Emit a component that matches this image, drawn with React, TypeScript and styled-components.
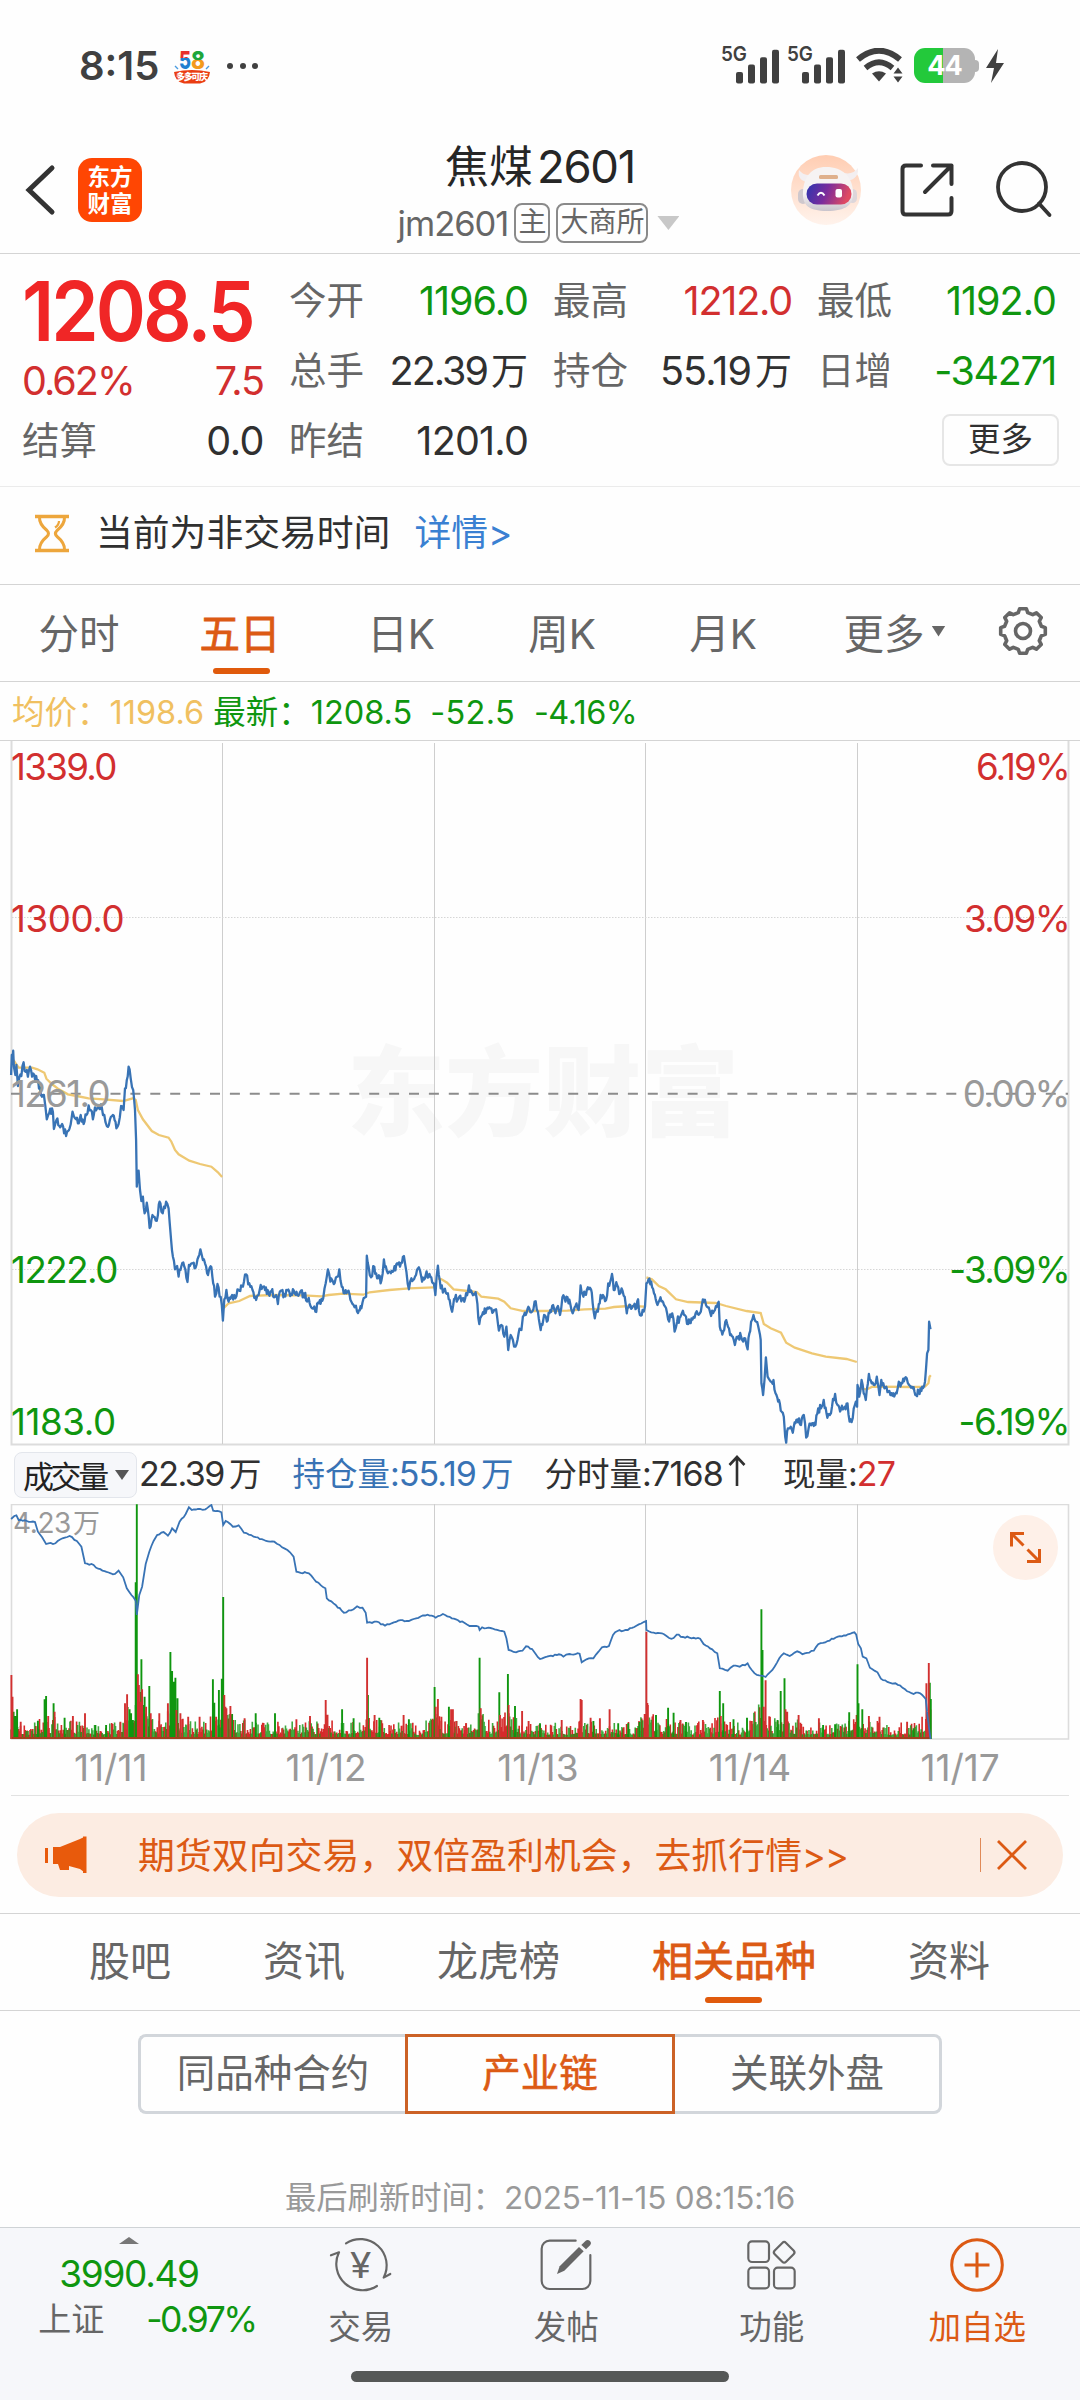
import React from "react";
import styled, { createGlobalStyle } from "styled-components";

const C = {
  red: "#d22f2f",
  green: "#0f960f",
  gray: "#666666",
  dark: "#303030",
  mute: "#999999",
  orange: "#dc5a14",
  blue: "#3873b5",
  gold: "#f0c060",
  line: "#d4d4d4",
};

const GlobalStyle = createGlobalStyle`
  * { box-sizing: border-box; }
  body { margin: 0; background: #fff; }
  svg { display: block; flex: none; }
`;

const Page = styled.div`
  width: 1080px;
  height: 2400px;
  display: flex;
  flex-direction: column;
  overflow: hidden;
  background: #fefefe;
  color: ${C.dark};
  font-family: Inter, "Noto Sans CJK SC", sans-serif;
  white-space: nowrap;
`;

const Txt = styled.span<{ $s: number; $c?: string; $ls?: number; $w?: number }>`
  font-size: ${(p) => p.$s}px;
  color: ${(p) => p.$c ?? "inherit"};
  letter-spacing: ${(p) => p.$ls ?? 0}px;
  font-weight: ${(p) => p.$w ?? 400};
`;

/* ---------- status bar ---------- */

const StatusBar = styled.div`
  height: 131px;
  flex: none;
  display: flex;
  align-items: center;
  justify-content: space-between;
  padding: 0 74px 0 79px;
  color: #404040;
`;

const StatusGroup = styled.div`
  display: flex;
  align-items: center;
`;

const BadgeBox = styled.span`
  margin-left: 13px;
`;

const PromoBadge = () => (
  <svg width="40" height="40" viewBox="0 0 40 40">
    <defs>
      <linearGradient id="five" x1="0" y1="0" x2="0" y2="1">
        <stop offset="0.45" stopColor="#e8302a" />
        <stop offset="0.45" stopColor="#1f7fd0" />
      </linearGradient>
      <linearGradient id="eight" x1="0" y1="0" x2="0" y2="1">
        <stop offset="0.52" stopColor="#1fa53a" />
        <stop offset="0.52" stopColor="#f39a1d" />
      </linearGradient>
    </defs>
    <text x="7" y="22.500" fontFamily="Inter" fontSize="25" fontWeight="800" fill="url(#five)" textLength="12" lengthAdjust="spacingAndGlyphs">5</text>
    <text x="19" y="22.500" fontFamily="Inter" fontSize="25" fontWeight="800" fill="url(#eight)" textLength="14" lengthAdjust="spacingAndGlyphs">8</text>
    <path d="M3 20l3 3M37 20l-3 3" stroke="#4a9be0" strokeWidth="1.4" />
    <path d="M2 26Q20 22 38 26Q37 36 28 37.500H12Q3 36 2 26Z" fill="#ea3d12" />
    <text x="4" y="34" fontFamily="Noto Sans CJK SC" fontSize="9" fontWeight="900" fill="#fff" textLength="32">多多可庆</text>
  </svg>
);

const Dots = styled.div`
  display: flex;
  gap: 6.5px;
  margin-left: 15px;
  i {
    width: 6px;
    height: 6px;
    border-radius: 3px;
    background: #404040;
  }
`;

const Signal = ({ w }: { w: number }) => (
  <svg width={w} height="56" viewBox={`0 -8 ${w} 56`}>
    <text x="0" y="14.500" fontFamily="Inter" fontSize="20.500" fontWeight="600" fill="#404040" textLength="26" lengthAdjust="spacingAndGlyphs">5G</text>
    {[0, 1, 2, 3].map((i) => (
      <rect key={i} x={15 + i * 12} y={26 - i * 7.4} width="7" height={11.5 + i * 7.4} rx="2" fill="#404040" />
    ))}
  </svg>
);

const Wifi = () => (
  <svg width="48" height="36" viewBox="0 0 48 36" fill="none" stroke="#404040">
    <path d="M2 11.500Q23 -6 44 11.500" strokeWidth="6" />
    <path d="M9.500 20Q23 8.500 36.500 20" strokeWidth="5.600" />
    <path d="M16 25.500Q23 21 30 25.500L23 33.500Z" fill="#404040" stroke="none" />
    <path d="M37.500 25.500L42 19.500L46.500 25.500ZM37.500 28.500H46.500L42 34.500Z" fill="#404040" stroke="none" />
  </svg>
);

const Battery = styled.div`
  width: 61px;
  height: 35px;
  margin-left: 10px;
  border-radius: 11px;
  display: flex;
  align-items: center;
  justify-content: center;
  color: #fff;
  font-size: 27px;
  font-weight: 700;
  letter-spacing: -1px;
  background: linear-gradient(90deg, #23c93b 47%, #b4b4b4 47%);
`;

const BatteryTip = styled.div`
  width: 4px;
  height: 12px;
  margin-right: 3px;
  border-radius: 0 4px 4px 0;
  background: #b4b4b4;
`;

/* ---------- title header ---------- */

const Header = styled.header`
  height: 123px;
  flex: none;
  display: grid;
  grid-template-columns: 330px 1fr 330px;
  border-bottom: 1px solid ${C.line};
`;

const HeaderLeft = styled.div`
  display: flex;
  align-items: center;
  padding: 0 0 4px 25px;
  gap: 22px;
`;

const Logo = styled.div`
  width: 64px;
  height: 64px;
  border-radius: 14px;
  background: #ff4603;
  color: #fff;
  font-size: 22.5px;
  font-weight: 700;
  line-height: 27px;
  padding-top: 5px;
  text-align: center;
`;

const TitleBox = styled.div`
  display: flex;
  flex-direction: column;
  align-items: center;
  padding-top: 8px;
`;

const TitleLine = styled.div`
  height: 56px;
  line-height: 56px;
  color: #262626;
  display: flex;
  gap: 4px;
`;

const SubLine = styled.div`
  height: 56px;
  display: flex;
  align-items: center;
  color: ${C.gray};
  margin-right: 3px;
`;

const Tag = styled.span`
  height: 40px;
  padding: 0 2px;
  margin-left: 6px;
  border: 2px solid #8a8a8a;
  border-radius: 8px;
  font-size: 28px;
  line-height: 35px;
`;

const HeaderRight = styled.div`
  display: flex;
  align-items: center;
  gap: 36px;
  padding: 0 0 4px 41px;
`;

const Robot = () => (
  <svg width="70" height="70" viewBox="0 0 70 70">
    <defs>
      <linearGradient id="halo" x1="0" y1="0" x2="0" y2="1">
        <stop offset="0" stopColor="#ffcdb2" />
        <stop offset="1" stopColor="#fff3ec" />
      </linearGradient>
      <linearGradient id="visor" x1="0" y1="0" x2="1" y2="0.2">
        <stop offset="0" stopColor="#2c35b0" />
        <stop offset="0.5" stopColor="#7a2c9c" />
        <stop offset="1" stopColor="#e04a62" />
      </linearGradient>
      <linearGradient id="shell" x1="0" y1="0" x2="0" y2="1">
        <stop offset="0.6" stopColor="#f6f3f3" />
        <stop offset="1" stopColor="#c9c4cc" />
      </linearGradient>
    </defs>
    <circle cx="35" cy="35" r="35" fill="url(#halo)" />
    <path d="M16 27Q6 25 8 15Q14 22 20 19ZM56 26Q68 24 67 13Q62 20 53 18Z" fill="#f3eff1" />
    <rect x="7" y="34" width="10" height="15" rx="5" fill="#cfc8cd" />
    <rect x="57" y="34" width="9" height="14" rx="4.500" fill="#ddd6da" />
    <path d="M35 12C52 12 61 22 62 36C63 50 55 56 36 56C18 56 11 50 12 37C13 22 20 12 35 12Z" fill="url(#shell)" />
    <rect x="28" y="20" width="19" height="4" rx="1.500" fill="#dfb08c" />
    <rect x="15.500" y="28.500" width="45" height="21" rx="10.500" fill="url(#visor)" />
    <path d="M26.500 40.500Q30 35 33.500 40.500" stroke="#fff" strokeWidth="2" fill="none" />
    <rect x="44.500" y="34" width="6.500" height="8.500" rx="2" fill="#fff" />
  </svg>
);

const ShareIcon = () => (
  <svg width="60" height="60" viewBox="0 0 60 60" fill="none" stroke="#333" strokeWidth="4" strokeLinecap="round" strokeLinejoin="round">
    <path d="M24 5.500H9Q5.500 5.500 5.500 9V51Q5.500 54.500 9 54.500H51Q54.500 54.500 54.500 51V38" />
    <path d="M36 5.500H54.500V24M54.500 5.500L28 32" />
  </svg>
);

const SearchIcon = () => (
  <svg width="60" height="60" viewBox="0 0 60 60" fill="none" stroke="#333" strokeWidth="3.800" strokeLinecap="round">
    <circle cx="29" cy="27" r="24" />
    <path d="M46 43.500L56.500 55" />
  </svg>
);

/* ---------- quote summary ---------- */

const Quote = styled.section`
  height: 233px;
  flex: none;
  display: grid;
  grid-template-columns: 242px 239px 239px 239px;
  column-gap: 25px;
  padding: 12px 0 0 22px;
  border-bottom: 1px solid #ebebeb;
`;

const QuoteCol = styled.div`
  display: flex;
  flex-direction: column;
`;

const QuoteRow = styled.div<{ $h?: number }>`
  height: ${(p) => p.$h ?? 70}px;
  line-height: ${(p) => p.$h ?? 70}px;
  display: flex;
  justify-content: space-between;
`;

const LastPrice = styled.span`
  font-size: 82.5px;
  font-weight: 600;
  letter-spacing: -3.2px;
  color: #f02626;
  transform: scaleX(0.923);
  transform-origin: left center;
`;

const Label = styled.span`
  font-size: 37.5px;
  color: ${C.gray};
`;

const MoreButton = styled.div`
  width: 117px;
  height: 52px;
  margin: 8px -3px 0 auto;
  border: 2px solid #e6e6e6;
  border-radius: 8px;
  text-align: center;
  font-size: 32.5px;
  line-height: 47px;
`;

const WanGroup = styled.span<{ $gap: number }>`
  display: inline-flex;
  align-items: baseline;
  gap: ${(p) => p.$gap}px;
`;

const Wanned = ({ n, s, cjk, ls, gap = 4 }: { n: string; s: number; cjk: number; ls: number; gap?: number }) => (
  <WanGroup $gap={gap}>
    <Txt $s={s} $ls={ls}>{n}</Txt>
    <Txt $s={cjk}>万</Txt>
  </WanGroup>
);

/* ---------- notice ---------- */

const Notice = styled.div`
  height: 98px;
  flex: none;
  display: flex;
  align-items: center;
  padding: 0 0 6px 35px;
  border-bottom: 1px solid ${C.line};
  font-size: 36.8px;
`;

const NoticeText = styled.span`
  margin: -5px 0 0 27px;
`;

const NoticeLink = styled.span`
  margin: -5px 0 0 24px;
  color: #3a80d2;
`;

const Hourglass = () => (
  <svg width="34" height="40" viewBox="0 0 34 40" fill="none" stroke="#eda63c" strokeWidth="3">
    <path d="M0 3.500H34M0 37.500H34" strokeWidth="3.600" />
    <path d="M4.500 4Q4 11 12 17.500Q15 20.500 12 23.500Q4 30 4.500 37M29.500 4Q30 11 22 17.500Q19 20.500 22 23.500Q30 30 29.500 37" />
    <path d="M24 8Q24 12 20 14.500" strokeWidth="2.200" />
  </svg>
);

/* ---------- period tabs ---------- */

const PeriodTabs = styled.nav`
  height: 97px;
  flex: none;
  display: flex;
  border-bottom: 1px solid ${C.line};
`;

const PeriodTab = styled.div<{ $on?: boolean; $w?: number }>`
  width: ${(p) => p.$w ?? 161}px;
  display: flex;
  position: relative;
  align-items: center;
  justify-content: center;
  padding: 0 3px 4px 0;
  font-size: 40.5px;
  color: ${(p) => (p.$on ? C.orange : C.gray)};
  -webkit-text-stroke: ${(p) => (p.$on ? 0.8 : 0)}px ${C.orange};
`;

const Underline = styled.i`
  position: absolute;
  left: 50%;
  bottom: 7px;
  width: 57px;
  height: 6px;
  margin-left: -29px;
  border-radius: 4px;
  background: #e05a0c;
`;

const Caret = styled.i<{ $w: number; $h: number; $c: string; $up?: boolean; $ml?: number }>`
  flex: none;
  width: ${(p) => p.$w}px;
  height: ${(p) => p.$h}px;
  margin-left: ${(p) => p.$ml ?? 0}px;
  background: ${(p) => p.$c};
  clip-path: ${(p) => (p.$up ? "polygon(50% 0, 100% 100%, 0 100%)" : "polygon(0 0, 100% 0, 50% 100%)")};
`;

const gearPath = (() => {
  const pts: string[] = [];
  for (let i = 0; i < 8; i++) {
    const a = (i * Math.PI) / 4 - Math.PI / 2;
    const at = (d: number, r: number) => `${(25 + Math.cos(a + d) * r).toFixed(1)} ${(25 + Math.sin(a + d) * r).toFixed(1)}`;
    pts.push(at(-0.25, 19), at(-0.15, 22.6), at(0.15, 22.6), at(0.25, 19));
  }
  return `M${pts.join("L")}Z`;
})();

const Gear = () => (
  <svg width="50" height="50" viewBox="0 0 50 50" fill="none" stroke={C.gray} strokeWidth="3.600" strokeLinejoin="round">
    <path d={gearPath} />
    <circle cx="25" cy="25" r="7.500" />
  </svg>
);

const AverageRow = styled.div`
  height: 59px;
  flex: none;
  display: flex;
  line-height: 61px;
  padding-left: 12px;
  border-bottom: 1px solid ${C.line};
`;

const AverageItem = styled.span<{ $c: string; $ml?: number }>`
  color: ${(p) => p.$c};
  margin-left: ${(p) => p.$ml ?? 0}px;
  display: flex;
`;

/* ---------- charts ---------- */

type Pt = [number, number];

const parse = (s: string, x0: number, sx: number, y0: number): Pt[] =>
  s.trim().split(/\s+/).map((p) => {
    const [x, y] = p.split(",").map(Number);
    return [x / sx + x0, y / 3 + y0];
  });

const L = (s: string, y0: number) => parse(s, 0, 2.8, y0);
const R = (s: string, y0: number) => parse(s, 540, 2.904, y0);

const makeRandom = (seed: number) => () => {
  seed = (seed * 1664525 + 1013904223) % 4294967296;
  return seed / 4294967296;
};

const price: Pt[] = [
  ...L(
    `31,225 33,165 35,185 37,152 39,200 43,225 46,195 50,258 54,232 60,228 66,187 72,215 78,230 84,200 90,230 96,225 104,245 112,262 118,290 123,285 127,320 131,358 138,338 148,335 151,387 158,360 166,378 174,372 185,408 195,385 203,335 210,355 218,370 226,345 234,372 242,345 248,316 254,330 260,358 266,322 275,325 285,322 292,345 299,378 308,358 316,345 326,385 332,372 339,318 346,330 350,265 355,240 360,200 366,235 373,270 378,330 381,420 383,560 388,512 392,570 396,603 400,590 405,640 411,608 419,684 427,645 436,662 442,645 447,605 452,635 459,620 465,605 472,625 475,665 479,720 484,770 490,808 496,798 500,830 508,798 516,800 525,846 529,795 537,790 545,805 553,778 561,748 568,780 574,790 580,820 592,802 597,850 602,890 609,852 615,890 621,915 624,962 628,898 634,870 640,905 650,885 659,895 668,870 680,860 689,823 698,850 707,870 717,900 724,885 730,855 742,870 752,882 760,875 770,890 778,912 786,872 796,882 810,875 825,880 838,882 850,880 862,900 874,925 883,935 893,910 905,895 912,850 918,808 925,845 937,850 944,830 950,808 957,860 965,880 973,875 984,905 993,922 1000,935 1012,925 1018,895 1025,890 1027,767 1032,800 1039,832 1048,800 1056,835 1068,842 1075,778 1083,812 1092,815 1102,812 1112,790 1120,800 1131,768 1138,815 1145,868 1152,835 1162,830 1173,802 1182,845 1192,825 1205,830 1215,850 1219,885 1226,797 1234,865 1243,870 1254,880 1266,935 1274,895 1286,890 1300,905 1313,856 1322,880 1334,890 1342,972 1350,945 1362,930 1376,925 1386,930 1392,950 1397,992 1404,975 1412,1010 1418,980 1423,1050 1430,1005 1436,1020 1443,1040 1452,1000 1460,990 1464,950 1472,945 1482,925 1490,935 1497,905 1506,935`,
    1000,
  ),
  ...R(
    `2,990 12,945 20,965 30,930 38,915 45,940 52,918 58,945 65,892 74,905 80,892 88,912 95,940 103,918 112,930 118,856 126,890 136,870 148,868 153,910 159,955 168,935 176,885 183,885 192,900 198,850 204,845 209,822 214,870 224,855 230,882 237,865 246,890 252,940 262,915 272,918 280,925 285,898 290,945 298,930 305,920 309,850 315,838 323,845 331,880 341,915 350,892 360,915 372,958 384,940 391,995 398,965 408,950 415,932 424,950 430,972 440,955 452,940 464,940 473,898 482,915 490,922 497,948 508,930 519,905 522,980 532,995 538,965 546,980 552,1005 560,1010 566,1035 574,1015 584,1010 596,1015 603,1048 608,1000 613,965 620,945 628,965 636,990 641,1020 643,1150 648,1185 652,1140 656,1072 661,1130 670,1145 678,1140 684,1180 694,1200 702,1235 708,1250 712,1310 715,1328 720,1285 728,1280 734,1298 742,1270 752,1255 758,1275 766,1245 773,1313 780,1285 790,1270 800,1275 808,1225 816,1225 824,1200 832,1240 842,1245 848,1220 857,1182 864,1215 874,1228 882,1225 893,1210 899,1265 908,1255 917,1205 921,1220 922,1155 927,1190 934,1140 940,1180 946,1200 955,1122 963,1150 972,1155 978,1130 986,1185 991,1140 1000,1165 1012,1175 1026,1180 1036,1180 1042,1145 1052,1150 1065,1135 1072,1155 1080,1160 1090,1185 1100,1175 1110,1160 1118,1145 1124,1060 1128,1050 1130,965 1134,988`,
    1000,
  ),
];

const averages: Pt[][] = [
  L("38,180 45,192 52,203 62,203 90,203 105,208 124,218 130,236 145,252 165,268 190,283 215,288 248,295 290,298 345,303 372,295 380,300 386,330 400,358 425,393 445,405 472,413 480,425 490,450 500,463 530,482 560,492 592,500 610,517 622,531", 1000),
  L("626,925 640,910 670,903 700,888 760,885 850,886 900,889 920,885 960,881 1018,884 1035,877 1090,870 1145,865 1215,862", 1000),
  [
    ...L("1226,836 1235,837 1252,848 1270,868 1310,873 1335,876 1348,890 1395,896 1412,905 1430,925 1465,933", 1000),
    ...R("0,933 80,932 130,928 190,926 215,921 260,918 305,920", 1000),
  ],
  R("309,832 325,838 345,858 365,868 395,898 430,906 510,909 540,918 600,933 641,939 650,972 670,985 700,998 715,1028 740,1043 790,1060 830,1070 890,1077 920,1086", 1000),
  R("925,1165 950,1168 965,1160 1080,1161 1118,1160 1128,1150 1131,1130 1135,1126", 1000),
];

const openInterest: Pt[] = [
  ...L(
    "31,237 40,228 46,226 52,240 75,243 98,246 106,275 118,292 129,312 155,310 175,295 195,288 215,303 228,320 238,370 262,375 275,386 310,400 322,402 332,392 345,412 355,445 368,465 380,482 383,525 390,465 398,440 408,372 418,335 430,303 440,285 458,276 470,287 482,265 492,276 503,245 520,222 529,202 537,210 560,207 575,208 592,195 597,212 620,217 625,255 632,243 652,260 668,256 683,278 710,290 745,303 768,305 790,322 812,337 822,350 830,395 865,400 885,425 911,445 915,475 940,495 963,518 990,508 1000,499 1015,503 1024,518 1028,548 1055,545 1078,557 1115,542 1145,543 1165,535 1197,524 1220,533 1240,522 1265,535 1300,548 1315,558 1340,560 1343,570 1350,562 1385,568 1412,575 1418,595 1424,630 1445,637 1463,632 1473,619 1490,627 1500,642",
    1440,
  ),
  ...R(
    "0,657 20,650 55,643 68,650 85,642 115,641 121,667 135,658 155,655 170,635 180,622 200,618 212,585 225,573 255,570 280,557 308,543 309,570 330,578 360,583 375,594 388,594 397,584 415,591 465,596 475,612 500,628 515,640 522,685 545,692 562,677 580,680 603,670 615,690 630,705 655,711 675,690 695,655 708,640 725,648 747,634 762,643 795,632 808,613 835,603 865,590 900,582 913,577 918,583 924,612 932,625 937,650 948,655 958,683 980,697 990,716 1015,728 1032,730 1060,748 1085,762 1098,758 1110,765 1120,777 1124,815",
    1440,
  ),
];

type Bar = { x: number; y: number; up: boolean };

const parseBars = (s: string, x0: number, sx: number): Bar[] =>
  s.trim().split(/\s+/).map((p) => {
    const [x, y, c] = p.split(",");
    return { x: Number(x) / sx + x0, y: Number(y) / 3 + 1440, up: c === "r" };
  });

const peaks: Bar[] = [
  ...parseBars(
    "32,705,r 35,770,r 38,815,g 43,828,g 48,808,g 58,845,r 106,842,g 125,778,g 129,768,g 135,828,r 150,790,g 153,815,r 181,833,g 204,828,r 238,820,r 267,855,g 297,855,g 337,845,r 350,790,r 356,763,r 363,808,g 367,820,g 372,840,g 380,427,g 383,193,g 386,703,r 389,735,r 393,785,r 396,658,g 398,748,r 402,795,g 405,770,g 409,800,r 418,738,g 422,820,r 446,820,r 470,790,r 477,636,g 480,760,g 482,693,g 487,725,g 489,790,g 491,713,g 497,775,g 494,810,r 505,820,r 527,830,r 559,830,r 596,718,g 600,788,g 605,830,r 613,750,g 621,716,g 625,471,g 628,765,r 631,800,r 634,805,r 645,798,r 650,822,g 685,835,r 716,820,g 740,862,r 770,820,g 790,865,r 830,838,r 868,828,r 912,780,r 917,824,r 958,808,g 990,835,g 1028,653,r 1030,765,g 1049,825,r 1062,833,g 1130,825,r 1145,838,g 1217,741,g 1220,800,r 1226,777,r 1236,830,r 1257,800,g 1263,808,r 1268,808,r 1278,843,r 1305,850,r 1343,653,g 1346,805,r 1398,757,g 1400,825,r 1422,702,g 1424,795,r 1442,798,g 1462,813,r 1480,843,r 1512,850,g",
    0,
    2.8,
  ),
  ...parseBars(
    "63,840,r 118,777,r 121,780,r 147,833,r 155,843,g 174,835,r 202,808,r 227,850,g 256,850,g 289,846,g 304,822,r 309,575,r 313,795,r 328,830,r 337,825,g 372,803,g 388,818,g 408,840,r 424,846,g 473,840,r 522,753,g 525,828,r 532,790,g 562,838,g 601,833,g 615,843,r 643,508,g 646,630,g 649,800,r 655,721,r 690,840,g 699,753,g 710,715,g 713,808,r 718,815,r 751,825,r 810,835,r 822,855,g 857,853,g 898,817,g 922,673,g 925,790,g 936,808,g 955,828,r 986,830,r 1066,845,r 1085,865,g 1122,730,r 1125,815,r 1129,669,r 1132,728,g 1135,777,g",
    540,
    2.904,
  ),
];

const BASE = 1739;

// Minute-by-minute background volume, heavier close to the session peaks.
const minuteBars: Bar[] = (() => {
  const rnd = makeRandom(77);
  const out: Bar[] = [];
  for (let x = 11; x < 931; x += 0.95) {
    const near = peaks.reduce((m, p) => {
      const d = Math.abs(p.x - x);
      return d < 14 ? Math.max(m, ((BASE - p.y) / 8) * (1 - d / 14)) : m;
    }, 0);
    const h = 3.5 + Math.pow(rnd(), 2) * (11 + Math.min(near, 20) * 1.3) + Math.min(near, 13) * 0.6;
    out.push({ x, y: BASE - h, up: rnd() > 0.48 });
  }
  return out;
})();

// Adds tick-sized jitter between the samples of a series.
const jitter = (pts: Pt[], amp: number, step: number, seed: number): Pt[] => {
  const rnd = makeRandom(seed);
  const out: Pt[] = [pts[0]];
  for (let i = 1; i < pts.length; i++) {
    const [ax, ay] = pts[i - 1];
    const [bx, by] = pts[i];
    const n = Math.floor((bx - ax) / step);
    for (let k = 1; k < n; k++) {
      const t = k / n;
      out.push([ax + (bx - ax) * t, ay + (by - ay) * t + (rnd() - 0.5) * 2 * amp]);
    }
    out.push([bx, by]);
  }
  return out;
};

const toPoints = (pts: Pt[]) => pts.map(([x, y]) => `${x.toFixed(1)},${y.toFixed(1)}`).join(" ");

const barPath = (bars: Bar[], up: boolean) =>
  bars.filter((b) => b.up === up).map((b) => `M${b.x.toFixed(1)} ${BASE}V${b.y.toFixed(1)}`).join("");

const GRID_X = [222.5, 434.5, 645.5, 857.5];

const AxisText = styled.text<{ $ls?: number; $s?: number }>`
  font-family: Inter, "Noto Sans CJK SC", sans-serif;
  font-size: ${(p) => p.$s ?? 36.7}px;
  letter-spacing: ${(p) => p.$ls ?? -1.3}px;
`;

const Watermark = styled.text`
  font-family: "Noto Sans CJK SC", sans-serif;
  font-size: 98px;
  font-weight: 900;
`;

const axis: { y: number; left: string; right: string; c: string; ll: number; rl: number }[] = [
  { y: 767, left: "1339.0", right: "6.19%", c: C.red, ll: -1.7, rl: -1.9 },
  { y: 918.5, left: "1300.0", right: "3.09%", c: C.red, ll: -0.4, rl: -1.7 },
  { y: 1094, left: "1261.0", right: "0.00%", c: C.mute, ll: -1.6, rl: -1.6 },
  { y: 1269.5, left: "1222.0", right: "-3.09%", c: C.green, ll: -1.5, rl: -1.7 },
  { y: 1421.7, left: "1183.0", right: "-6.19%", c: C.green, ll: -0.4, rl: -1.5 },
];

const PriceChart = () => (
  <svg width="1080" height="705" viewBox="0 741 1080 705" fill="none">
    <Watermark x="347" y="1128" fill="#f7f7f7">东方财富</Watermark>
    <path d="M11.500 741V1444.500H1068.500V741" stroke="#dcdcdc" strokeWidth="2" />
    <path d={GRID_X.map((x) => `M${x} 743V1444`).join("")} stroke="#cecece" />
    <path d="M12 917.500H1068M12 1269.500H1068" stroke="#d6d6d6" strokeDasharray="1.500 1.500" />
    <path d="M11 1093.700H1068" stroke="#8c8c8c" strokeWidth="2" strokeDasharray="10 9.900" />
    {averages.map((a, i) => (
      <polyline key={i} points={toPoints(a)} stroke="#eec873" strokeWidth="2.300" />
    ))}
    <polyline points={toPoints(jitter(price, 4.2, 0.85, 9))} stroke={C.blue} strokeWidth="2.300" strokeLinejoin="round" />
    {axis.map((a) => (
      <React.Fragment key={a.left}>
        <AxisText x="11" y={a.y + 13.3} fill={a.c} $ls={a.ll}>{a.left}</AxisText>
        <AxisText x="1069" y={a.y + 13.3} fill={a.c} $ls={a.rl} textAnchor="end">{a.right}</AxisText>
      </React.Fragment>
    ))}
  </svg>
);

const VolumeChart = () => (
  <svg width="1080" height="236" viewBox="0 1504 1080 236" fill="none">
    <path d="M11.500 1504.500H1068.500V1739H11.500Z" stroke="#dcdcdc" strokeWidth="1.600" />
    <path d={GRID_X.map((x) => `M${x} 1504V1739`).join("")} stroke="#cecece" />
    <AxisText x="13" y="1533" fill={C.mute} $s={28} $ls={-0.4}>4.23</AxisText>
    <AxisText x="73" y="1533" fill={C.mute} $s={27}>万</AxisText>
    <path d={barPath(minuteBars, true)} stroke="#d62a2a" strokeWidth="1.600" />
    <path d={barPath(minuteBars, false)} stroke="#0f960f" strokeOpacity="0.800" strokeWidth="1.600" />
    <path d={barPath(peaks, false)} stroke="#0f960f" strokeWidth="1.900" />
    <path d={barPath(peaks, true)} stroke="#d23030" strokeWidth="1.900" />
    <path d="M12 1738H931" stroke="#a0401c" strokeWidth="2" />
    <polyline points={toPoints(jitter(openInterest, 0.8, 2, 5))} stroke={C.blue} strokeWidth="1.800" />
    <path d="M927 1712L930.500 1739" stroke={C.blue} strokeWidth="1.800" />
  </svg>
);

const VolumeBar = styled.div`
  height: 58px;
  flex: none;
  display: flex;
  align-items: center;
  padding-left: 14px;
`;

const Selector = styled.div`
  width: 123px;
  height: 46px;
  display: flex;
  align-items: center;
  padding-left: 8px;
  border: 1.5px solid #e3e6ec;
  border-radius: 8px;
  background: #f6f7fa;
  color: #222;
`;

const SelectorText = styled.span`
  width: 83px;
  margin-top: -2px;
  font-size: 31px;
  letter-spacing: -3.4px;
`;

const Metric = styled.span<{ $x: number; $c?: string }>`
  height: 58px;
  line-height: 56px;
  margin-left: ${(p) => p.$x}px;
  color: ${(p) => p.$c ?? C.dark};
  display: flex;
  align-items: baseline;
`;

const UpArrow = () => (
  <svg width="26" height="31" viewBox="4 1 26 31" fill="none" stroke={C.dark} strokeWidth="2.600">
    <path d="M18 32V3M10.500 11L18 3L25.500 11" />
  </svg>
);

const VolumePanel = styled.div`
  position: relative;
  flex: none;
`;

const ExpandButton = styled.div`
  position: absolute;
  right: 22px;
  top: 11px;
  width: 65px;
  height: 65px;
  border-radius: 50%;
  background: #fef0e8;
  display: flex;
  align-items: center;
  justify-content: center;
`;

const DateRow = styled.div`
  height: 56px;
  flex: none;
  margin: 0 11px;
  display: grid;
  grid-template-columns: repeat(5, 1fr);
  border-bottom: 1.5px solid #e2e2e2;
  font-size: 37px;
  line-height: 56px;
  color: ${C.mute};
  span {
    padding-left: 63px;
  }
`;

/* ---------- banner ---------- */

const Banner = styled.div`
  height: 84px;
  flex: none;
  margin: 17px 17px 16px;
  border-radius: 42px;
  background: #fcece2;
  display: flex;
  align-items: center;
  padding: 0 35px 0 27px;
  color: ${C.orange};
  font-size: 36.9px;
`;

const BannerText = styled.span`
  flex: 1;
  margin: -4px 0 0 50px;
`;

const BannerDivider = styled.i`
  width: 1.5px;
  height: 34px;
  background: #e08a58;
  margin-right: 15px;
`;

/* ---------- info tabs ---------- */

const InfoTabs = styled.nav`
  height: 98px;
  flex: none;
  display: flex;
  gap: 92px;
  padding-left: 89px;
  border-top: 1px solid ${C.line};
  border-bottom: 1px solid ${C.line};
`;

const InfoTab = styled.div<{ $on?: boolean }>`
  position: relative;
  font-size: 41px;
  line-height: 95px;
  color: ${(p) => (p.$on ? C.orange : C.gray)};
  -webkit-text-stroke: ${(p) => (p.$on ? 0.8 : 0)}px ${C.orange};
`;

const Segments = styled.div`
  height: 80px;
  flex: none;
  margin: 23px 138px 0;
  display: grid;
  grid-template-columns: 267px 270px 267px;
`;

const Segment = styled.div<{ $on?: boolean; $edge?: "l" | "r" }>`
  border: 3px solid ${(p) => (p.$on ? "#cc6226" : "#d2d6db")};
  border-left-width: ${(p) => (p.$edge === "r" ? 0 : 3)}px;
  border-right-width: ${(p) => (p.$edge === "l" ? 0 : 3)}px;
  border-radius: ${(p) => (p.$edge === "l" ? "8px 0 0 8px" : p.$edge === "r" ? "0 8px 8px 0" : "0")};
  color: ${(p) => (p.$on ? C.orange : C.gray)};
  -webkit-text-stroke: ${(p) => (p.$on ? 0.6 : 0)}px ${C.orange};
  font-size: 38.5px;
  line-height: 73px;
  text-align: center;
`;

const Refresh = styled.div`
  flex: 1;
  display: flex;
  justify-content: center;
  padding-top: 59px;
  line-height: 50px;
  color: ${C.mute};
`;

/* ---------- bottom bar ---------- */

const BottomBar = styled.footer`
  height: 173px;
  flex: none;
  background: #f6f7fa;
  border-top: 1px solid #cfd3d6;
  display: flex;
  flex-direction: column;
`;

const BottomItems = styled.div`
  height: 143px;
  display: grid;
  grid-template-columns: 258px repeat(4, 205.5px);
`;

const IndexCell = styled.div`
  display: flex;
  flex-direction: column;
  align-items: center;
  padding-top: 9px;
`;

const IndexValue = styled.div`
  margin-top: 7px;
  height: 45px;
  line-height: 45px;
  font-size: 37px;
  letter-spacing: -1.3px;
  color: ${C.green};
`;

const IndexRow = styled.div`
  height: 47px;
  line-height: 47px;
  display: flex;
  gap: 42px;
  margin-left: 36px;
  color: ${C.gray};
`;

const Action = styled.div<{ $c?: string }>`
  display: flex;
  flex-direction: column;
  align-items: center;
  padding-top: 8px;
  font-size: 32.5px;
  line-height: 40px;
  gap: 14px;
  color: ${(p) => p.$c ?? C.gray};
`;

const HomeBar = styled.div`
  width: 378px;
  height: 11px;
  margin: 0 auto;
  border-radius: 6px;
  background: #555857;
`;

const TradeIcon = () => (
  <svg width="63.300" height="58" viewBox="27 33 190 174" fill="none" stroke="#666" strokeWidth="6.500" strokeLinecap="round" strokeLinejoin="round">
    <path d="M78 55A79 79 0 0 1 191 158L211 147" />
    <path d="M171 183A79 79 0 0 1 57 82L33 91" />
    <text x="122" y="160" fontFamily="Inter" fontSize="106" textAnchor="middle" fill="#666" stroke="none" textLength="64" lengthAdjust="spacingAndGlyphs">¥</text>
  </svg>
);

const PostIcon = () => (
  <svg width="54" height="58" viewBox="658 33 162 174" fill="none" stroke="#666" strokeWidth="6.500" strokeLinecap="round">
    <path d="M768 47H690A24 24 0 0 0 666 71V168A24 24 0 0 0 690 192H788A24 24 0 0 0 812 168V90" />
    <path d="M712 147L720 124L778 66L792 79L734 137Z" fill="#666" stroke="none" />
    <path d="M785 60L798 47Q804 42 811 48Q817 54 812 60L799 73Z" fill="#666" stroke="none" />
  </svg>
);

const AppsIcon = () => (
  <svg width="54" height="58" viewBox="1274 33 162 174" fill="none" stroke="#666" strokeWidth="6.500">
    <rect x="1284" y="49" width="62" height="62" rx="11" />
    <rect x="1284" y="128" width="62" height="62" rx="11" />
    <rect x="1361" y="128" width="62" height="62" rx="11" />
    <rect x="1367.500" y="58" width="48" height="48" rx="8" transform="rotate(45 1391.500 82)" />
  </svg>
);

const PlusIcon = () => (
  <svg width="58" height="58" viewBox="0 0 58 58" fill="none" stroke={C.orange} strokeWidth="3">
    <circle cx="29" cy="29" r="25.300" />
    <path d="M29 16.500V41.500M16.500 29H41.500" />
  </svg>
);

export default function App() {
  return (
    <Page>
      <GlobalStyle />
      <StatusBar>
        <StatusGroup>
          <Txt $s={40} $w={600}>8:15</Txt>
          <BadgeBox><PromoBadge /></BadgeBox>
          <Dots><i /><i /><i /></Dots>
        </StatusGroup>
        <StatusGroup>
          <Signal w={66} />
          <Signal w={69} />
          <Wifi />
          <Battery>44</Battery>
          <BatteryTip />
          <svg width="24" height="36" viewBox="0 0 24 36">
            <path d="M16 1L4 20H12L9 35L22 15H14Z" fill="#404040" />
          </svg>
        </StatusGroup>
      </StatusBar>

      <Header>
        <HeaderLeft>
          <svg width="31" height="52" viewBox="0 0 31 52" fill="none" stroke="#333" strokeWidth="5" strokeLinecap="round">
            <path d="M27 4L4 26L27 48" />
          </svg>
          <Logo>东方<br />财富</Logo>
        </HeaderLeft>
        <TitleBox>
          <TitleLine>
            <Txt $s={44}>焦煤</Txt>
            <Txt $s={45.5} $ls={-1.3}>2601</Txt>
          </TitleLine>
          <SubLine>
            <Txt $s={34.5} $ls={-1}>jm2601</Txt>
            <Tag>主</Tag>
            <Tag>大商所</Tag>
            <Caret $w={22} $h={14} $c="#c8c8c8" $ml={9} />
          </SubLine>
        </TitleBox>
        <HeaderRight>
          <Robot />
          <ShareIcon />
          <SearchIcon />
        </HeaderRight>
      </Header>

      <Quote>
        <QuoteCol>
          <QuoteRow $h={90}><LastPrice>1208.5</LastPrice></QuoteRow>
          <QuoteRow $h={50}>
            <Txt $s={39.5} $ls={-2} $c={C.red}>0.62%</Txt>
            <Txt $s={39.5} $ls={-1} $c={C.red}>7.5</Txt>
          </QuoteRow>
          <QuoteRow><Label>结算</Label><Txt $s={39.5} $ls={-0.5}>0.0</Txt></QuoteRow>
        </QuoteCol>
        <QuoteCol>
          <QuoteRow><Label>今开</Label><Txt $s={39.5} $ls={-1} $c={C.green}>1196.0</Txt></QuoteRow>
          <QuoteRow><Label>总手</Label><Wanned n="22.39" s={39.5} cjk={37} ls={-2} /></QuoteRow>
          <QuoteRow><Label>昨结</Label><Txt $s={39.5} $ls={-0.8}>1201.0</Txt></QuoteRow>
        </QuoteCol>
        <QuoteCol>
          <QuoteRow><Label>最高</Label><Txt $s={39.5} $ls={-1.2} $c={C.red}>1212.0</Txt></QuoteRow>
          <QuoteRow><Label>持仓</Label><Wanned n="55.19" s={39.5} cjk={37} ls={-0.9} /></QuoteRow>
        </QuoteCol>
        <QuoteCol>
          <QuoteRow><Label>最低</Label><Txt $s={39.5} $ls={-1} $c={C.green}>1192.0</Txt></QuoteRow>
          <QuoteRow><Label>日增</Label><Txt $s={39.5} $ls={-1.4} $c={C.green}>-34271</Txt></QuoteRow>
          <MoreButton>更多</MoreButton>
        </QuoteCol>
      </Quote>

      <Notice>
        <Hourglass />
        <NoticeText>当前为非交易时间</NoticeText>
        <NoticeLink>详情&gt;</NoticeLink>
      </Notice>

      <PeriodTabs>
        <PeriodTab>分时</PeriodTab>
        <PeriodTab $on>五日<Underline /></PeriodTab>
        <PeriodTab>日K</PeriodTab>
        <PeriodTab>周K</PeriodTab>
        <PeriodTab>月K</PeriodTab>
        <PeriodTab $w={182}>更多<Caret $w={14} $h={11} $c={C.gray} $ml={7} /></PeriodTab>
        <PeriodTab $w={75}><Gear /></PeriodTab>
      </PeriodTabs>

      <AverageRow>
        <AverageItem $c={C.gold}><Txt $s={32.5}>均价：</Txt><Txt $s={32.5}>1198.6</Txt></AverageItem>
        <AverageItem $c={C.green} $ml={9}><Txt $s={32.5}>最新：</Txt><Txt $s={32.5}>1208.5</Txt></AverageItem>
        <AverageItem $c={C.green} $ml={18}><Txt $s={32.5} $ls={0.3}>-52.5</Txt></AverageItem>
        <AverageItem $c={C.green} $ml={19}><Txt $s={32.5} $ls={-0.6}>-4.16%</Txt></AverageItem>
      </AverageRow>

      <PriceChart />

      <VolumeBar>
        <Selector>
          <SelectorText>成交量</SelectorText>
          <Caret $w={14} $h={10} $c="#555" $ml={9} />
        </Selector>
        <Metric $x={2}><Wanned n="22.39" s={34} cjk={32.5} ls={-1.5} gap={5} /></Metric>
        <Metric $x={31} $c={C.blue}>
          <Txt $s={32.5}>持仓量</Txt>
          <Wanned n=":55.19" s={34} cjk={32.5} ls={-1} gap={5} />
        </Metric>
        <Metric $x={31}><Txt $s={32.5}>分时量</Txt><Txt $s={34} $ls={-0.8}>:7168</Txt><UpArrow /></Metric>
        <Metric $x={34}><Txt $s={32.5}>现量</Txt><Txt $s={34} $ls={-1}>:</Txt><Txt $s={34} $c={C.red} $ls={-0.8}>27</Txt></Metric>
      </VolumeBar>

      <VolumePanel>
        <VolumeChart />
        <ExpandButton>
          <svg width="33" height="33" viewBox="0 0 33 33" fill="none" stroke={C.orange} strokeWidth="3">
            <path d="M15 2.500H2.500V15.500M3 3L14.500 14.500M18 30.500H30.500V18M30 30L18.500 18.500" />
          </svg>
        </ExpandButton>
      </VolumePanel>

      <DateRow>
        {["11/11", "11/12", "11/13", "11/14", "11/17"].map((d) => (
          <span key={d}>{d}</span>
        ))}
      </DateRow>

      <Banner>
        <svg width="44" height="40" viewBox="0 0 44 40" fill="#e85a0c">
          <path d="M1 13H4V28H1ZM9 12L16 12L36 4V34L25 31V35H16L14 29H9ZM39 1.500H42.500V38H39ZM36 4L40 2V37L36 34Z" />
        </svg>
        <BannerText>期货双向交易，双倍盈利机会，去抓行情<Txt $s={36} $ls={-0.8}>&gt;&gt;</Txt></BannerText>
        <BannerDivider />
        <svg width="32" height="32" viewBox="0 0 32 32" fill="none" stroke={C.orange} strokeWidth="2.800">
          <path d="M2 2L30 30M30 2L2 30" />
        </svg>
      </Banner>

      <InfoTabs>
        <InfoTab>股吧</InfoTab>
        <InfoTab>资讯</InfoTab>
        <InfoTab>龙虎榜</InfoTab>
        <InfoTab $on>相关品种<Underline /></InfoTab>
        <InfoTab>资料</InfoTab>
      </InfoTabs>

      <Segments>
        <Segment $edge="l">同品种合约</Segment>
        <Segment $on>产业链</Segment>
        <Segment $edge="r">关联外盘</Segment>
      </Segments>

      <Refresh>
        <Txt $s={31.3}>最后刷新时间：</Txt>
        <Txt $s={31.5} $ls={-0.2}>2025-11-15 08:15:16</Txt>
      </Refresh>

      <BottomBar>
        <BottomItems>
          <IndexCell>
            <Caret $w={20} $h={7} $c="#777" $up />
            <IndexValue>3990.49</IndexValue>
            <IndexRow>
              <Txt $s={33}>上证</Txt>
              <Txt $s={35.5} $ls={-2.4} $c={C.green}>-0.97%</Txt>
            </IndexRow>
          </IndexCell>
          <Action><TradeIcon />交易</Action>
          <Action><PostIcon />发帖</Action>
          <Action><AppsIcon />功能</Action>
          <Action $c={C.orange}><PlusIcon />加自选</Action>
        </BottomItems>
        <HomeBar />
      </BottomBar>
    </Page>
  );
}
